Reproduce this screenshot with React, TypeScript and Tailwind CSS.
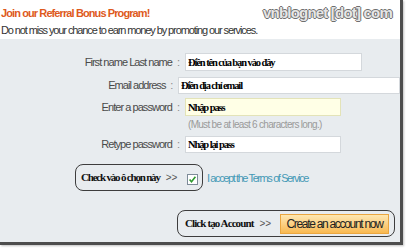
import React from "react";

const sans = "font-['Liberation_Sans',Arial,sans-serif]";
const serif = "font-['Liberation_Serif','Times_New_Roman',serif]";

const FormRow = ({
  label,
  value,
  width,
  height = "h-[18px]",
  yellow = false,
}: {
  label: string;
  value: string;
  width: string;
  height?: string;
  yellow?: boolean;
}) => {
  return (
    <div className="flex items-center">
      <div className={`w-[172px] text-right text-[11px] tracking-[-0.95px] text-[#4a4a4a] ${sans}`}>
        {label}
      </div>
      <div className={`w-[13px] text-center text-[11px] text-[#8a8a8a] ${sans}`}>:</div>
      <input
        readOnly
        defaultValue={value}
        className={`${width} ${height} shrink-0 border px-[2px] text-[10.5px] font-bold tracking-[-1.1px] text-black outline-none ${serif} ${
          yellow ? "bg-[#ffffe6] border-[#e3e3b8]" : "bg-white border-[#d4d8dc]"
        }`}
      />
    </div>
  );
};

const CheckBox = () => (
  <svg width="11" height="11" viewBox="0 0 11 11">
    <rect x="0.5" y="0.5" width="10" height="10" fill="#fff" stroke="#7d8b98" />
    <path d="M2.6 5.6 L4.5 7.8 L8.4 2.8" fill="none" stroke="#2f9a2f" strokeWidth="1.6" />
  </svg>
);

export default function App() {
  return (
    <div className="w-[406px] h-[248px] bg-white overflow-hidden">
      <div className="relative w-[403px] h-[245px] flex flex-col border-r-[3px] border-b-[3px] border-[#4d4d4d] shadow-[1px_1px_2px_rgba(0,0,0,0.25)]">
        {/* header */}
        <div className="h-[39px] shrink-0 bg-white pl-[1px] pt-[6px]">
          <div className={`text-[11px] leading-[15px] font-bold tracking-[-0.9px] text-[#de5a1d] ${sans}`}>
            Join our Referral Bonus Program!
          </div>
          <div className={`mt-[2px] text-[11px] leading-[14px] tracking-[-1.1px] text-[#333] ${sans}`}>
            Do not miss your chance to earn money by promoting our services.
          </div>
        </div>
        <div
          className={`absolute right-[8px] top-[2px] text-[15px] font-bold tracking-[-0.8px] text-[#e6e6e6] [text-shadow:1px_0_#6f6f6f,-1px_0_#6f6f6f,0_1px_#6f6f6f,0_-1px_#6f6f6f] ${sans}`}
        >
          vnblognet [dot] com
        </div>

        {/* form panel */}
        <div className="flex-1 overflow-hidden bg-[#e8ecef] pt-[14px]">
          <FormRow label="First name Last name" value="Điền tên của bạn vào đây" width="w-[177px]" />
          <div className="mt-[6px]">
            <FormRow label="Email address" value="Điền địa chỉ email" width="w-[222px]" height="h-[17px]" />
          </div>
          <div className="mt-[4px]">
            <FormRow label="Enter a password" value="Nhập pass" width="w-[156px]" yellow />
          </div>
          <div className={`ml-[188px] mt-[2px] h-[14px] leading-[14px] text-[10px] tracking-[-0.7px] text-[#9a9a9a] ${sans}`}>
            (Must be at least 6 characters long.)
          </div>
          <div className="mt-[4px]">
            <FormRow label="Retype password" value="Nhập lại pass" width="w-[156px]" height="h-[17px]" />
          </div>

          {/* terms */}
          <div className="mt-[11px] flex items-center">
            <div className="ml-[75px] flex h-[27px] w-[128px] shrink-0 items-center rounded-[8px] border-[1.5px] border-[#3d3d3d] pl-[5px] pr-[4px]">
              <span className={`whitespace-nowrap text-[11px] font-bold tracking-[-1.2px] text-[#111] ${serif}`}>
                Check vào ô chọn này
              </span>
              <span className={`ml-[6px] whitespace-nowrap text-[10px] text-[#555] ${sans}`}>&gt;&gt;</span>
              <span className="ml-auto mt-[4px] flex">
                <CheckBox />
              </span>
            </div>
            <span className={`ml-[4px] mt-[1px] whitespace-nowrap text-[11px] tracking-[-1.4px] text-[#4599b6] ${sans}`}>
              I accept the Terms of Service
            </span>
          </div>

          {/* submit */}
          <div className="ml-[177px] mt-[19px] flex h-[27px] w-[218px] items-center rounded-[8px] border-[1.5px] border-[#3d3d3d] pl-[7px]">
            <span className={`whitespace-nowrap text-[11px] font-bold tracking-[-0.9px] text-[#111] ${serif}`}>
              Click tạo Account
            </span>
            <span className={`ml-[6px] text-[10px] text-[#555] ${sans}`}>&gt;&gt;</span>
            <button
              className={`ml-auto mr-[5px] h-[20px] w-[109px] border border-[#eaa640] bg-gradient-to-b from-[#fee7b0] to-[#f8b94f] whitespace-nowrap text-[12px] tracking-[-1.3px] text-[#222] ${sans}`}
            >
              Create an account now
            </button>
          </div>
        </div>
      </div>
    </div>
  );
}
